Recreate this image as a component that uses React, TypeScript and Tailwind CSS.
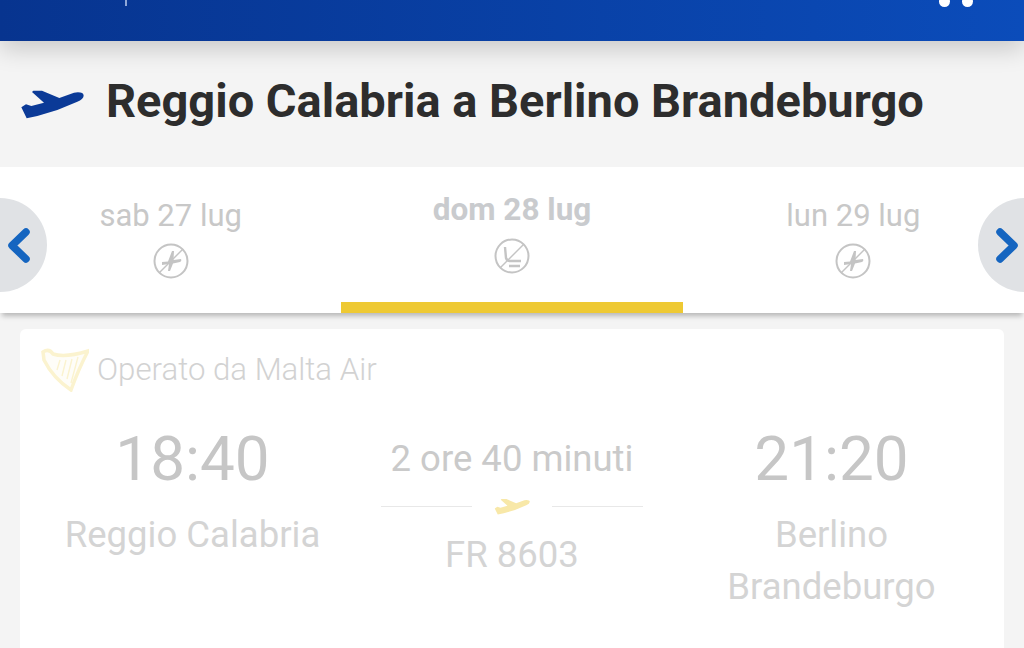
import React from "react";

function PlaneSolid({ className }: { className?: string }) {
  return (
    <svg className={className} viewBox="60 265 192 90" fill="currentColor">
      <path d="M64 320 L78 311 L94 316 L132 306 L96 274 L100 270 L126 270 L178 292 L222 276 Q250 272 251 285 Q250 296 232 303 L172 328 L112 346 L80 353 Z" />
    </svg>
  );
}

function NoPlane() {
  return (
    <svg className="w-9 h-9 text-[#c4c4c4]" viewBox="0 0 36 36" fill="none" stroke="currentColor">
      <circle cx="18" cy="18" r="16.5" strokeWidth="2" />
      <path d="M6 30 L30 6" strokeWidth="1.4" />
      <path
        d="M9 19 L15 18.5 L19 8 L21 8 L20.5 17 L28 16 Q29 18 27 19 L20 20.5 L17 28 L15 28 L16 21 L9 22 Z"
        fill="currentColor"
        stroke="none"
      />
    </svg>
  );
}

function NoSeat() {
  return (
    <svg className="w-9 h-9 text-[#c4c4c4]" viewBox="0 0 36 36" fill="none" stroke="currentColor">
      <circle cx="18" cy="18" r="16.5" strokeWidth="2" />
      <path d="M6 30 L30 6" strokeWidth="1.4" />
      <path d="M11 9 L12 20 Q13 23 16 23 L27 23 M15 28 L26 28" strokeWidth="2.4" />
    </svg>
  );
}

function Harp() {
  return (
    <svg className="w-12 h-[46px] text-[#fbf3cf]" viewBox="0 0 48 46" fill="none" stroke="currentColor">
      <path d="M2 6 Q8 2 12 8 Q24 12 47 5 Q38 22 30 44 Q12 32 3 14 Z" fill="currentColor" fillOpacity="0.15" strokeWidth="3.5" />
      <path d="M19 14 L16 24 M25 14 L21 30 M31 13 L26 33 M37 11 L30 37" strokeWidth="1.4" />
    </svg>
  );
}

function Chevron({ dir }: { dir: "left" | "right" }) {
  return (
    <svg className="w-[22px] h-[35px] text-[#1565c0]" viewBox="0 0 22 35" fill="none" stroke="currentColor">
      <path
        d={dir === "left" ? "M18 4 L4 17.5 L18 31" : "M4 4 L18 17.5 L4 31"}
        strokeWidth="7.5"
        strokeLinecap="round"
        strokeLinejoin="round"
      />
    </svg>
  );
}

export default function App() {
  return (
    <div className="w-[1024px] h-[648px] overflow-hidden bg-[#f4f4f4] font-['Roboto',sans-serif]">
      <header className="relative h-[41px] bg-gradient-to-r from-[#07348f] to-[#0b4cba] shadow-[0_8px_24px_rgba(0,0,0,0.18)]">
        <div className="absolute left-[125px] top-0 w-[2px] h-[6px] bg-[#8fa8d8]" />
        <div className="absolute left-[939px] -top-[4px] w-[11px] h-[11px] rounded-full bg-white" />
        <div className="absolute left-[962px] -top-[4px] w-[11px] h-[11px] rounded-full bg-white" />
      </header>

      <div className="h-[126px] flex items-start pt-[31px] pl-[20px]">
        <PlaneSolid className="w-[64px] h-[30px] mt-[17px] text-[#0b3a97]" />
        <h1 className="ml-[22px] text-[47px] leading-[58px] font-bold text-[#2d2d2d] whitespace-nowrap">
          Reggio Calabria a Berlino Brandeburgo
        </h1>
      </div>

      <nav className="relative h-[146px] bg-white grid grid-cols-3 shadow-[0_5px_5px_-2px_rgba(0,0,0,0.25)]">
        <div className="flex flex-col items-center pt-[31px]">
          <span className="text-[31px] leading-[36px] text-[#c8c8c8]">sab 27 lug</span>
          <div className="mt-[9px]"><NoPlane /></div>
        </div>
        <div className="flex flex-col items-center pt-[25px] border-b-[11px] border-[#eec933]">
          <span className="text-[31.5px] leading-[36px] font-bold text-[#c9cbce]">dom 28 lug</span>
          <div className="mt-[10px]"><NoSeat /></div>
        </div>
        <div className="flex flex-col items-center pt-[31px]">
          <span className="text-[31px] leading-[36px] text-[#c8c8c8]">lun 29 lug</span>
          <div className="mt-[9px]"><NoPlane /></div>
        </div>
        <button className="absolute -left-[47px] top-[31px] w-[94px] h-[94px] rounded-full bg-[#e0e2e5] flex items-center justify-end pr-[17px]">
          <Chevron dir="left" />
        </button>
        <button className="absolute -right-[48px] top-[31px] w-[94px] h-[94px] rounded-full bg-[#e0e2e5] flex items-center justify-start pl-[18px]">
          <Chevron dir="right" />
        </button>
      </nav>

      <section className="mt-[16px] mx-[20px] h-[340px] rounded-t-[6px] bg-white">
        <div className="flex items-center h-[80px] pl-[21px]">
          <Harp />
          <span className="ml-[8px] pt-[2px] text-[31.2px] leading-[40px] font-light text-[#d2d2d2]">Operato da Malta Air</span>
        </div>
        <div className="grid grid-cols-[345px_1fr_345px]">
          <div className="flex flex-col items-center pt-[15px]">
            <span className="text-[62px] leading-[70px] text-[#c6c6c6]">18:40</span>
            <span className="mt-[15px] text-[36.5px] leading-[52px] text-[#d4d4d4] text-center">Reggio Calabria</span>
          </div>
          <div className="flex flex-col items-center pt-[28px]">
            <span className="text-[36.5px] leading-[44px] text-[#cacaca]">2 ore 40 minuti</span>
            <div className="mt-[17px] flex items-center gap-[22px]">
              <div className="w-[91px] h-[1px] bg-[#e8e8e8]" />
              <PlaneSolid className="w-[36px] h-[17px] text-[#f8e8a8]" />
              <div className="w-[91px] h-[1px] bg-[#e8e8e8]" />
            </div>
            <span className="mt-[15px] text-[36.5px] leading-[50px] text-[#d4d4d4]">FR 8603</span>
          </div>
          <div className="flex flex-col items-center pt-[15px]">
            <span className="text-[62px] leading-[70px] text-[#c6c6c6]">21:20</span>
            <span className="mt-[15px] text-[36.5px] leading-[52px] text-[#d4d4d4] text-center">
              Berlino
              <br />
              Brandeburgo
            </span>
          </div>
        </div>
      </section>
    </div>
  );
}
